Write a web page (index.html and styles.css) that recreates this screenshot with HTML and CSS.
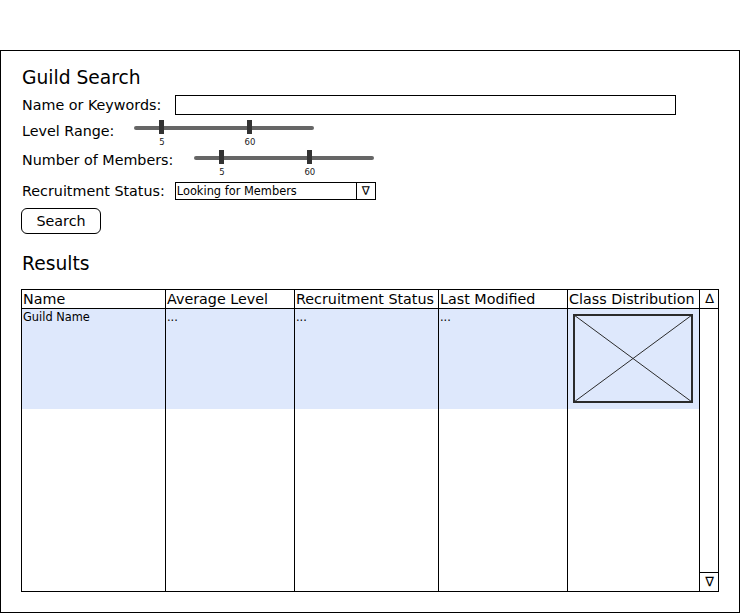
FILE: index.html
```html
<!DOCTYPE html>
<html>
<head>
<meta charset="utf-8">
<link rel="stylesheet" href="styles.css">
</head>
<body>
<div class="frame">
  <h1 class="title">Guild Search</h1>

  <div class="row row-name">
    <span class="label">Name or Keywords:</span>
    <div class="input"></div>
  </div>

  <div class="row row-level">
    <span class="label label-slider">Level Range:</span>
    <div class="slider slider-level">
      <div class="track"></div>
      <div class="thumb" style="left:25px"></div>
      <div class="thumb" style="left:113px"></div>
      <span class="tick" style="left:27.5px">5</span>
      <span class="tick" style="left:115.5px">60</span>
    </div>
  </div>

  <div class="row row-members">
    <span class="label label-slider2">Number of Members:</span>
    <div class="slider slider-members">
      <div class="track"></div>
      <div class="thumb" style="left:25px"></div>
      <div class="thumb" style="left:113px"></div>
      <span class="tick" style="left:27.5px">5</span>
      <span class="tick" style="left:115.5px">60</span>
    </div>
  </div>

  <div class="row row-status">
    <span class="label label-select">Recruitment Status:</span>
    <div class="select">
      <span class="select-text">Looking for Members</span>
      <span class="select-arrow">∇</span>
    </div>
  </div>

  <div class="button">Search</div>

  <h2 class="title title-results">Results</h2>

  <div class="table">
    <div class="th">Name</div>
    <div class="th">Average Level</div>
    <div class="th">Recruitment Status</div>
    <div class="th">Last Modified</div>
    <div class="th">Class Distribution</div>
    <div class="th th-scroll">∆</div>

    <div class="td hl">Guild Name</div>
    <div class="td hl">...</div>
    <div class="td hl">...</div>
    <div class="td hl">...</div>
    <div class="td hl">
      <svg class="placeholder" width="120" height="89" viewBox="0 0 120 89">
        <rect x="1" y="1" width="118" height="87" fill="none" stroke="#2b2b2b" stroke-width="2"/>
        <line x1="1" y1="1" x2="119" y2="88" stroke="#2b2b2b" stroke-width="1"/>
        <line x1="119" y1="1" x2="1" y2="88" stroke="#2b2b2b" stroke-width="1"/>
      </svg>
    </div>
    <div class="scroll">
      <div class="scroll-space"></div>
      <div class="scroll-down">∇</div>
    </div>

    <div class="td"></div>
    <div class="td"></div>
    <div class="td"></div>
    <div class="td"></div>
    <div class="td"></div>
  </div>
</div>
</body>
</html>
```

FILE: styles.css
```css
html, body {
  margin: 0;
  padding: 0;
  background: #fff;
}

body {
  font-family: "DejaVu Sans", sans-serif;
  color: #000;
}

.frame {
  box-sizing: border-box;
  width: 740px;
  height: 563px;
  margin-top: 50px;
  border: 1px solid #000;
  padding: 16px 0 0 20px;
}

.title {
  margin: 0 0 0 1px;
  font-size: 18.7px;
  font-weight: normal;
  line-height: 22px;
}

.row {
  display: flex;
  align-items: flex-start;
}

.label {
  font-size: 14.3px;
  line-height: 20px;
  margin-left: 1px;
  white-space: nowrap;
}

.row-name {
  margin-top: 6px;
  height: 20px;
}

.input {
  box-sizing: border-box;
  width: 501px;
  height: 20px;
  border: 1px solid #000;
  margin-left: 14px;
}

.row-level {
  height: 30px;
}

.row-members {
  height: 37px;
}

.label-slider {
  margin-top: 6px;
}

.label-slider2 {
  margin-top: 5px;
}

.slider {
  position: relative;
  width: 180px;
  height: 28px;
  margin-top: 5px;
}

.slider-level {
  margin-left: 20px;
}

.slider-members {
  margin-left: 21px;
}

.track {
  position: absolute;
  left: 0;
  right: 0;
  top: 6px;
  height: 4px;
  border-radius: 2px;
  background: #666;
}

.thumb {
  position: absolute;
  top: 0;
  width: 5px;
  height: 14px;
  background: #333;
}

.tick {
  position: absolute;
  top: 17px;
  transform: translateX(-50%);
  font-size: 8.5px;
  line-height: 10px;
  color: #222;
}

.row-status {
  height: 18px;
}

.label-select {
  line-height: 18px;
}

.select {
  box-sizing: border-box;
  display: flex;
  width: 201px;
  height: 18px;
  border: 1px solid #000;
  margin-left: 10px;
}

.select-text {
  flex: 1;
  font-size: 11.4px;
  line-height: 16px;
  padding-left: 1px;
  white-space: nowrap;
}

.select-arrow {
  box-sizing: border-box;
  width: 19px;
  border-left: 1px solid #000;
  text-align: center;
  font-size: 12px;
  line-height: 16px;
}

.button {
  box-sizing: border-box;
  width: 80px;
  height: 26px;
  margin-top: 8px;
  border: 1px solid #000;
  border-radius: 6px;
  font-size: 14.3px;
  line-height: 24px;
  text-align: center;
}

.title-results {
  margin-top: 19px;
}

.table {
  box-sizing: border-box;
  display: grid;
  grid-template-columns: 144px 129px 144px 129px 132px 19px;
  grid-template-rows: 19px 100px 1fr;
  width: 698px;
  height: 303px;
  margin-top: 14px;
  border: 1px solid #000;
}

.th {
  box-sizing: border-box;
  border-right: 1px solid #000;
  border-bottom: 1px solid #000;
  font-size: 14.3px;
  line-height: 18px;
  padding-left: 1px;
  white-space: nowrap;
  overflow: hidden;
}

.th-scroll {
  border-right: none;
  padding-left: 0;
  text-align: center;
  font-size: 13px;
}

.td {
  box-sizing: border-box;
  border-right: 1px solid #000;
  font-size: 11.4px;
  line-height: 14px;
  padding: 1px 0 0 1px;
  white-space: nowrap;
}

.hl {
  background: #dee8fc;
}

.placeholder {
  display: block;
  margin: 4px 0 0 4px;
}

.scroll {
  grid-column: 6;
  grid-row: 2 / 4;
  display: flex;
  flex-direction: column;
}

.scroll-space {
  flex: 1;
}

.scroll-down {
  box-sizing: border-box;
  height: 19px;
  border-top: 1px solid #000;
  text-align: center;
  font-size: 13px;
  line-height: 18px;
}
```
